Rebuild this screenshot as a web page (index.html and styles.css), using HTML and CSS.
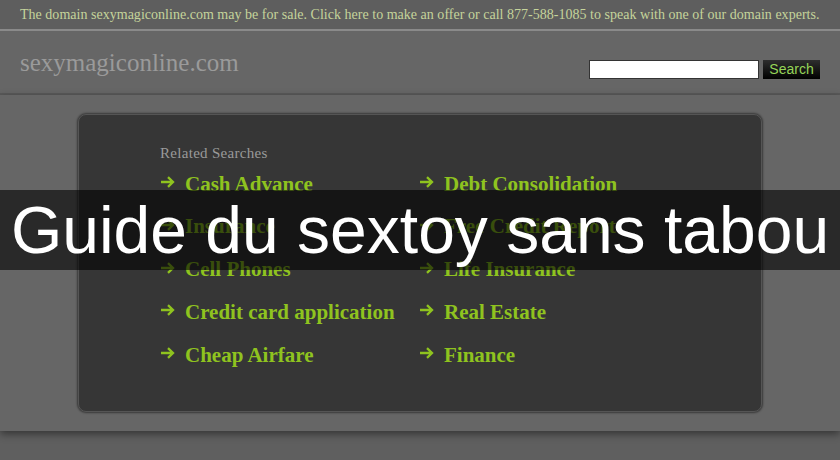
FILE: index.html
```html
<!DOCTYPE html>
<html>
<head>
<meta charset="utf-8">
<link rel="stylesheet" href="styles.css">
</head>
<body>
<div class="topbar">The domain sexymagiconline.com may be for sale. Click here to make an offer or call 877-588-1085 to speak with one of our domain experts.</div>
<div class="header">
  <div class="logo">sexymagiconline.com</div>
  <div class="search"><span class="search-input"></span><span class="search-btn">Search</span></div>
</div>
<div class="main">
  <div class="box">
    <div class="related">Related Searches</div>
    <div class="links">
      <div class="link"><svg class="arrow" viewBox="0 0 15 12"><path d="M1 6H13M8 1.2L13 6L8 10.8" fill="none" stroke="#8fc31f" stroke-width="2.3"/></svg>Cash Advance</div>
      <div class="link"><svg class="arrow" viewBox="0 0 15 12"><path d="M1 6H13M8 1.2L13 6L8 10.8" fill="none" stroke="#8fc31f" stroke-width="2.3"/></svg>Debt Consolidation</div>
      <div class="link"><svg class="arrow" viewBox="0 0 15 12"><path d="M1 6H13M8 1.2L13 6L8 10.8" fill="none" stroke="#8fc31f" stroke-width="2.3"/></svg>Insurance</div>
      <div class="link"><svg class="arrow" viewBox="0 0 15 12"><path d="M1 6H13M8 1.2L13 6L8 10.8" fill="none" stroke="#8fc31f" stroke-width="2.3"/></svg>Free Credit Report</div>
      <div class="link"><svg class="arrow" viewBox="0 0 15 12"><path d="M1 6H13M8 1.2L13 6L8 10.8" fill="none" stroke="#8fc31f" stroke-width="2.3"/></svg>Cell Phones</div>
      <div class="link"><svg class="arrow" viewBox="0 0 15 12"><path d="M1 6H13M8 1.2L13 6L8 10.8" fill="none" stroke="#8fc31f" stroke-width="2.3"/></svg>Life Insurance</div>
      <div class="link"><svg class="arrow" viewBox="0 0 15 12"><path d="M1 6H13M8 1.2L13 6L8 10.8" fill="none" stroke="#8fc31f" stroke-width="2.3"/></svg>Credit card application</div>
      <div class="link"><svg class="arrow" viewBox="0 0 15 12"><path d="M1 6H13M8 1.2L13 6L8 10.8" fill="none" stroke="#8fc31f" stroke-width="2.3"/></svg>Real Estate</div>
      <div class="link"><svg class="arrow" viewBox="0 0 15 12"><path d="M1 6H13M8 1.2L13 6L8 10.8" fill="none" stroke="#8fc31f" stroke-width="2.3"/></svg>Cheap Airfare</div>
      <div class="link"><svg class="arrow" viewBox="0 0 15 12"><path d="M1 6H13M8 1.2L13 6L8 10.8" fill="none" stroke="#8fc31f" stroke-width="2.3"/></svg>Finance</div>
    </div>
  </div>
</div>
<div class="overlay"><span>Guide du sextoy sans tabou</span></div>
</body>
</html>
```

FILE: styles.css
```css
html, body {
  margin: 0;
  padding: 0;
}
body {
  background: #5f5f5f;
  width: 840px;
  height: 460px;
  overflow: hidden;
  position: relative;
  font-family: "Liberation Serif", "DejaVu Serif", serif;
}
.topbar {
  height: 29px;
  line-height: 29px;
  padding-left: 20px;
  background: #5e5e5e;
  color: #c5d49b;
  font-size: 14px;
  letter-spacing: 0.02px;
  white-space: nowrap;
  border-bottom: 2px solid #8a8a8a;
}
.header {
  height: 62px;
  background: #666;
  border-bottom: 2px solid #5a5a5a;
  display: flex;
  justify-content: space-between;
  padding: 0 20px;
}
.logo {
  color: #9a9a9a;
  font-size: 25px;
  padding-top: 18px;
}
.search {
  display: flex;
  gap: 4px;
  padding-top: 29px;
}
.search-input {
  width: 168px;
  height: 17px;
  background: #fff;
  border: 1px solid #333;
}
.search-btn {
  width: 57px;
  height: 19px;
  background: linear-gradient(#2e2e2e, #000);
  color: #95d458;
  font-family: "Liberation Sans", Arial, sans-serif;
  font-size: 14px;
  line-height: 19px;
  text-align: center;
}
.main {
  background: #666;
  height: 336px;
  padding-top: 19px;
  box-sizing: border-box;
  box-shadow: 0 3px 8px rgba(0, 0, 0, 0.45);
  position: relative;
}
.box {
  margin: 0 78px;
  height: 298px;
  box-sizing: border-box;
  background: #363636;
  border: 1px solid #555;
  border-radius: 8px;
  box-shadow: 0 0 2px 1px rgba(0, 0, 0, 0.45);
  padding: 29px 0 0 81px;
}
.related {
  color: #9a9a9a;
  font-size: 15px;
  letter-spacing: 0.3px;
  line-height: 18px;
}
.links {
  display: grid;
  grid-template-columns: 259px auto;
  grid-auto-rows: 42.8px;
  margin-top: 9px;
}
.link {
  display: flex;
  align-items: center;
  height: 26px;
  color: #8fc31f;
  font-weight: bold;
  font-size: 21px;
  white-space: nowrap;
}
.arrow {
  width: 15px;
  height: 12px;
  margin-right: 10px;
  margin-top: -4px;
}
.overlay {
  position: absolute;
  left: 0;
  right: 0;
  top: 190px;
  height: 80px;
  background: rgba(0, 0, 0, 0.6);
  display: flex;
  align-items: center;
  justify-content: center;
  color: #fff;
  font-family: "Liberation Sans", Arial, sans-serif;
  font-size: 66px;
  white-space: nowrap;
}
```
